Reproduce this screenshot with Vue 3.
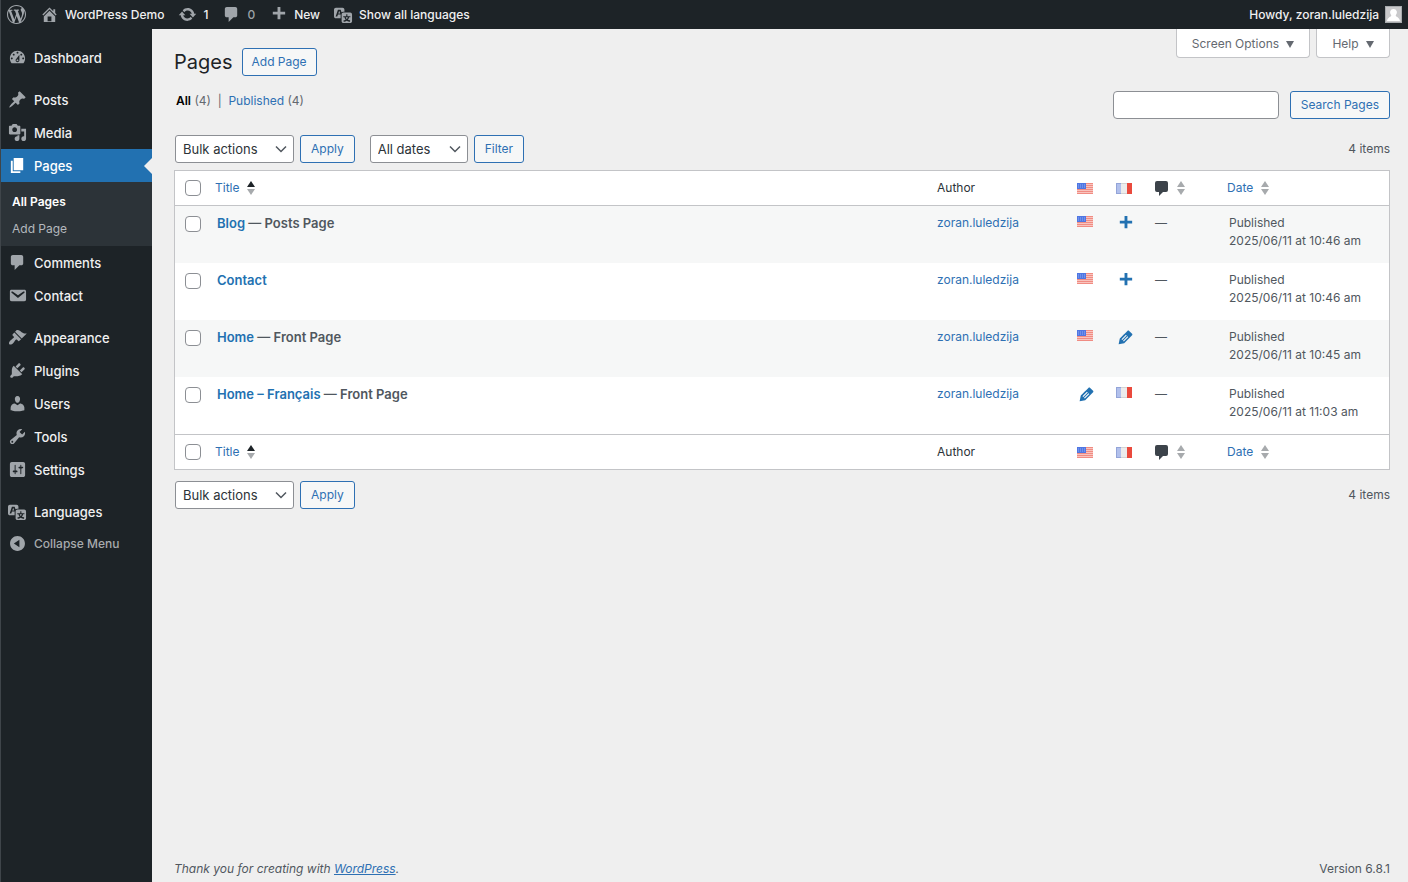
<script setup>
import { ref } from 'vue'

const icons = {
  wordpress: 'M20 10c0-5.51-4.49-10-10-10C4.48 0 0 4.49 0 10c0 5.52 4.48 10 10 10 5.51 0 10-4.48 10-10zM7.78 15.37L4.37 6.22c.55-.02 1.17-.08 1.17-.08.5-.06.44-1.13-.06-1.11 0 0-1.45.11-2.37.11-.18 0-.37 0-.58-.01C4.12 2.69 6.87 1.11 10 1.11c2.33 0 4.45.87 6.05 2.34-.68-.11-1.65.39-1.65 1.58 0 .74.45 1.36.9 2.1.35.61.55 1.36.55 2.46 0 1.49-1.4 5-1.4 5l-3.03-8.37c.54-.02.82-.17.82-.17.5-.05.44-1.25-.06-1.22 0 0-1.44.12-2.38.12-.87 0-2.33-.12-2.33-.12-.5-.03-.56 1.2-.06 1.22l.92.08 1.26 3.41zM17.41 10c.24-.64.74-1.87.43-4.25.7 1.29 1.05 2.71 1.05 4.25 0 3.29-1.73 6.24-4.4 7.78.97-2.59 1.94-5.2 2.92-7.78zM6.1 18.09C3.12 16.65 1.11 13.53 1.11 10c0-1.3.23-2.48.72-3.59C3.25 10.3 4.67 14.2 6.1 18.09zm4.03-6.63l2.58 6.98c-.86.29-1.76.45-2.71.45-.79 0-1.57-.11-2.29-.33.81-2.38 1.62-4.74 2.42-7.1z',
  home: 'M16 8.5l1.53 1.53-1.06 1.06L10 4.6l-6.47 6.49-1.06-1.06L10 2.5l4 4v-2h2v4zm-6-2.46l6 5.99V18H4v-5.97zM12 17v-5H8v5h4z',
  update: 'M10.2 3.28c3.53 0 6.43 2.61 6.92 6h2.08l-3.5 4-3.5-4h2.32c-.45-1.97-2.21-3.45-4.32-3.45-1.45 0-2.73.71-3.54 1.78L4.95 5.66C6.23 4.2 8.11 3.28 10.2 3.28zm-.4 13.44c-3.52 0-6.43-2.61-6.92-6H.8l3.5-4c1.17 1.33 2.33 2.67 3.5 4H5.48c.45 1.97 2.21 3.45 4.32 3.45 1.45 0 2.73-.71 3.54-1.78l1.71 1.95c-1.28 1.46-3.15 2.38-5.25 2.38z',
  comment: 'M5 2h9c1.1 0 2 .9 2 2v7c0 1.1-.9 2-2 2h-2l-5 5v-5H5c-1.1 0-2-.9-2-2V4c0-1.1.9-2 2-2z',
  plus: 'M17 7v3h-5v5H9v-5H4V7h5V2h3v5h5z',
  translation: 'M11 7H9.49c-.63 0-1.25.3-1.59.7L7 5H4.13l-2.39 7h1.69l.74-2H7v4H2c-1.1 0-2-.9-2-2V5c0-1.1.9-2 2-2h7c1.1 0 2 .9 2 2v2zM6.51 9H4.49l1-2.93zM10 8h7c1.1 0 2 .9 2 2v7c0 1.1-.9 2-2 2h-7c-1.1 0-2-.9-2-2v-7c0-1.1.9-2 2-2zm7.25 5v-1.08h-3.17V9.75h-1.16v2.17H9.75V13h1.28c.11.85.56 1.85 1.28 2.62-.87.36-1.89.62-2.31.62-.01.02.22.97.2 1.46.84 0 2.21-.5 3.28-1.15 1.09.65 2.48 1.15 3.34 1.15-.02-.49.2-1.44.2-1.46-.43 0-1.49-.27-2.38-.63.7-.77 1.14-1.77 1.25-2.61h1.36zm-3.81 1.93c-.5-.46-.85-1.13-1.01-1.93h2.09c-.17.8-.51 1.47-1 1.93l-.04.03s-.03-.02-.04-.03z',
  dashboard: 'M3.76 16h12.48c1.1-1.37 1.76-3.11 1.76-5 0-4.42-3.58-8-8-8s-8 3.58-8 8c0 1.89.66 3.63 1.76 5zM10 4c.55 0 1 .45 1 1s-.45 1-1 1-1-.45-1-1 .45-1 1-1zM6 6c.55 0 1 .45 1 1s-.45 1-1 1-1-.45-1-1 .45-1 1-1zm8 0c.55 0 1 .45 1 1s-.45 1-1 1-1-.45-1-1 .45-1 1-1zm-5.37 5.55L12 7v6c0 1.1-.9 2-2 2s-2-.9-2-2c0-.57.24-1.08.63-1.45zM4 10c.55 0 1 .45 1 1s-.45 1-1 1-1-.45-1-1 .45-1 1-1zm12 0c.55 0 1 .45 1 1s-.45 1-1 1-1-.45-1-1 .45-1 1-1zm-5 3c0-.55-.45-1-1-1s-1 .45-1 1 .45 1 1 1 1-.45 1-1z',
  pin: 'M10.44 3.02l1.82-1.82 6.36 6.35-1.83 1.82c-1.05-.68-2.48-.57-3.41.36l-.75.75c-.92.93-1.04 2.35-.35 3.41l-1.83 1.82-2.41-2.41-2.8 2.79c-.42.42-3.38 2.71-3.8 2.29s1.86-3.39 2.28-3.81l2.79-2.79L4.1 9.36l1.83-1.82c1.05.69 2.48.57 3.4-.36l.75-.75c.93-.92 1.05-2.35.36-3.41z',
  media: 'M13 11V4c0-.55-.45-1-1-1h-1.67L9 1H5L3.67 3H2c-.55 0-1 .45-1 1v7c0 .55.45 1 1 1h10c.55 0 1-.45 1-1zM7 4.5c1.38 0 2.5 1.12 2.5 2.5S8.38 9.5 7 9.5 4.5 8.38 4.5 7 5.62 4.5 7 4.5zM14 6h5v10.5c0 1.38-1.12 2.5-2.5 2.5S14 17.88 14 16.5s1.12-2.5 2.5-2.5c.17 0 .34.02.5.05V9h-3V6zm-4 8.05V13h2v3.5c0 1.38-1.12 2.5-2.5 2.5S7 17.88 7 16.5 8.12 14 9.5 14c.17 0 .34.02.5.05z',
  page: 'M6 15V2h10v13H6zm-1 1h8v2H3V5h2v11z',
  email: 'M3.87 4h13.25C18.37 4 19 4.59 19 5.79v8.42c0 1.19-.63 1.79-1.88 1.79H3.87c-1.25 0-1.88-.6-1.88-1.79V5.79c0-1.2.63-1.79 1.88-1.79zm6.62 8.6l6.74-5.53c.24-.2.43-.66.13-1.07-.29-.41-.82-.42-1.17-.17l-5.7 3.86L4.8 5.83c-.35-.25-.88-.24-1.17.17-.3.41-.11.87.13 1.07z',
  appearance: 'M14.48 11.06L7.41 3.99l1.5-1.5c.5-.56 2.3-.47 3.51.32 1.21.8 1.43 1.28 2.91 2.1 1.18.64 2.45 1.26 4.45.85zm-.71.71L6.7 4.7 4.93 6.47c-.39.39-.39 1.02 0 1.41l1.06 1.06c.39.39.39 1.03 0 1.42-.6.6-1.43 1.11-2.21 1.69-.35.26-.7.53-1.01.84C1.43 14.23.4 16.08 1.4 17.07c.99 1 2.84-.03 4.18-1.36.31-.31.58-.66.85-1.02.57-.78 1.08-1.61 1.69-2.21.39-.39 1.02-.39 1.41 0l1.06 1.06c.39.39 1.02.39 1.41 0z',
  plugins: 'M13.11 4.36L9.87 7.6 8 5.73l3.24-3.24c.35-.34 1.05-.2 1.56.32.52.51.66 1.21.31 1.55zm-8 1.77l.91-1.12 9.01 9.01-1.19.84c-.71.71-2.63 1.16-3.82 1.16H6.14L4.9 17.26c-.59.59-1.54.59-2.12 0-.59-.58-.59-1.53 0-2.12l1.24-1.24v-3.88c0-1.13.4-3.19 1.09-3.89zm7.26 3.97l3.24-3.24c.34-.35 1.04-.21 1.55.31.52.51.66 1.21.31 1.55l-3.24 3.25z',
  users: 'M10 9.25c-2.27 0-2.73-3.44-2.73-3.44C7 4.02 7.82 2 9.97 2c2.16 0 2.98 2.02 2.71 3.81 0 0-.41 3.44-2.68 3.44zm0 2.57L12.72 10c2.39 0 4.52 2.33 4.52 4.53v2.49s-3.65 1.13-7.24 1.13c-3.65 0-7.24-1.13-7.24-1.13v-2.49c0-2.25 1.94-4.48 4.47-4.48z',
  tools: 'M16.68 9.77c-1.34 1.34-3.3 1.67-4.95.99l-5.41 6.52c-.99.99-2.59.99-3.58 0s-.99-2.59 0-3.57l6.52-5.42c-.68-1.65-.35-3.61.99-4.95 1.28-1.28 3.12-1.62 4.72-1.06l-2.89 2.89 2.82 2.82 2.86-2.87c.53 1.58.18 3.39-1.08 4.65zM3.81 16.21c.4.39 1.04.39 1.43 0 .4-.4.4-1.04 0-1.43-.39-.4-1.03-.4-1.43 0-.39.39-.39 1.03 0 1.43z',
  settings: 'M18 16V4c0-1.1-.9-2-2-2H4c-1.1 0-2 .9-2 2v12c0 1.1.9 2 2 2h12c1.1 0 2-.9 2-2zM8 11h1c.55 0 1 .45 1 1s-.45 1-1 1H8v1.5c0 .28-.22.5-.5.5s-.5-.22-.5-.5V13H6c-.55 0-1-.45-1-1s.45-1 1-1h1V5.5c0-.28.22-.5.5-.5s.5.22.5.5V11zm5-2h-1c-.55 0-1-.45-1-1s.45-1 1-1h1V5.5c0-.28.22-.5.5-.5s.5.22.5.5V7h1c.55 0 1 .45 1 1s-.45 1-1 1h-1v5.5c0 .28-.22.5-.5.5s-.5-.22-.5-.5V9z',
  collapse: 'M10 2.16c4.33 0 7.84 3.51 7.84 7.84s-3.51 7.84-7.84 7.84S2.16 14.33 2.16 10 5.67 2.16 10 2.16zm2 11.72V6.12L6.18 9.97z',
  pencil: 'M13.89 3.09l3.01 3.02c.46.46.42 1.24.03 1.64l-8.31 8.32-5.86 1.16 1.16-5.88s7.9-7.93 8.29-8.33c.39-.39 1.22-.39 1.68.07zM10.5 7.100l-4.7 4.700.8.8 4.700-4.700zM12.100 8.700l-4.700 4.700.8.8 4.700-4.700z'
}

const barItems = [
  { icon: 'wordpress', label: '', name: 'About WordPress' },
  { icon: 'home', label: 'WordPress Demo' },
  { icon: 'update', label: '1' },
  { icon: 'comment', label: '0', dim: true },
  { icon: 'plus', label: 'New' },
  { icon: 'translation', label: 'Show all languages' }
]

const menuGroups = [
  [{ icon: 'dashboard', label: 'Dashboard' }],
  [
    { icon: 'pin', label: 'Posts' },
    { icon: 'media', label: 'Media' },
    { icon: 'page', label: 'Pages', current: true, children: ['All Pages', 'Add Page'] },
    { icon: 'comment', label: 'Comments' },
    { icon: 'email', label: 'Contact' }
  ],
  [
    { icon: 'appearance', label: 'Appearance' },
    { icon: 'plugins', label: 'Plugins' },
    { icon: 'users', label: 'Users' },
    { icon: 'tools', label: 'Tools' },
    { icon: 'settings', label: 'Settings' }
  ],
  [{ icon: 'translation', label: 'Languages' }]
]

const rows = [
  { title: 'Blog', state: 'Posts Page', en: 'us', fr: 'plus', date: '2025/06/11 at 10:46 am' },
  { title: 'Contact', state: '', en: 'us', fr: 'plus', date: '2025/06/11 at 10:46 am' },
  { title: 'Home', state: 'Front Page', en: 'us', fr: 'pencil', date: '2025/06/11 at 10:45 am' },
  { title: 'Home – Français', state: 'Front Page', en: 'pencil', fr: 'fr', date: '2025/06/11 at 11:03 am' }
]

const bulk = ref('Bulk actions')
const bulkBottom = ref('Bulk actions')
const dates = ref('All dates')
const query = ref('')
</script>

<template>
  <div class="shell">
    <svg class="defs" aria-hidden="true">
      <symbol id="flag-us" viewBox="0 0 16 11">
        <rect width="16" height="11" fill="#f9c4be" />
        <path d="M0 .5h16M0 2.5h16M0 4.5h16M0 6.5h16M0 8.5h16M0 10.5h16" stroke="#f08c83" />
        <rect width="9" height="6" fill="#4f76e2" />
        <path d="M1 2h7M1 4h7" stroke="#8fabf3" stroke-width="1" stroke-dasharray="1 1" />
      </symbol>
      <symbol id="flag-fr" viewBox="0 0 16 11">
        <rect width="16" height="11" fill="#ececec" />
        <rect width="5" height="11" fill="#b1c0ec" />
        <rect x="11" width="5" height="11" fill="#ea4a3d" />
        <path d="M.5 0v11M0 .5h5M0 10.5h5" stroke="#93a4d8" />
        <path d="M5 .5h6M5 10.5h6" stroke="#d4d4d4" />
      </symbol>
    </svg>

    <header class="bar">
      <nav class="bar-nav" aria-label="Toolbar">
        <a v-for="b in barItems" :key="b.icon" href="#" class="bar-item" :class="{ dim: b.dim }" :aria-label="b.name">
          <svg class="icon" viewBox="0 0 20 20"><path :d="icons[b.icon]" /></svg>
          <span v-if="b.label">{{ b.label }}</span>
        </a>
      </nav>
      <a href="#" class="bar-item account">
        <span>Howdy, zoran.luledzija</span>
        <svg class="avatar" viewBox="0 0 17 17">
          <rect width="17" height="17" fill="#c9c9cb" />
          <path d="M8.5 3a3.400 3.600 0 0 1 2.200 6.400c0 1.600 3.800 1.400 4.300 5.600H2c.5-4.200 4.300-4 4.300-5.600A3.400 3.600 0 0 1 8.500 3z" fill="#fff" />
          <rect x=".5" y=".5" width="16" height="16" fill="none" stroke="#a7aaad" />
        </svg>
      </a>
    </header>

    <div class="body">
      <nav class="menu" aria-label="Main menu">
        <ul v-for="(g, i) in menuGroups" :key="i" class="group">
          <li v-for="m in g" :key="m.label">
            <a href="#" class="menu-item" :class="{ current: m.current }">
              <svg class="icon" viewBox="0 0 20 20"><path :d="icons[m.icon]" /></svg>
              <span>{{ m.label }}</span>
            </a>
            <ul v-if="m.children" class="submenu">
              <li v-for="(c, k) in m.children" :key="c">
                <a href="#" :class="{ active: k === 0 }">{{ c }}</a>
              </li>
            </ul>
          </li>
        </ul>
        <button type="button" class="menu-item collapse">
          <svg class="icon" viewBox="0 0 20 20"><path :d="icons.collapse" /></svg>
          <span>Collapse Menu</span>
        </button>
      </nav>

      <main class="content">
        <div class="head">
          <div class="heading">
            <h1>Pages</h1>
            <a href="#" class="btn">Add Page</a>
          </div>
          <div class="tabs">
            <button type="button">Screen Options <svg viewBox="0 0 8 7"><path d="M0 0h8L4 7z" /></svg></button>
            <button type="button">Help <svg viewBox="0 0 8 7"><path d="M0 0h8L4 7z" /></svg></button>
          </div>
        </div>

        <div class="views">
          <p><a href="#" class="all">All</a> (4) &nbsp;|&nbsp; <a href="#">Published</a> (4)</p>
          <form class="search" @submit.prevent>
            <input v-model="query" type="search" aria-label="Search Pages" />
            <button type="submit" class="btn">Search Pages</button>
          </form>
        </div>

        <div class="nav-row">
          <span class="select bulk">
            <select v-model="bulk" aria-label="Select bulk action"><option>Bulk actions</option></select>
            <svg viewBox="0 0 12 8"><path d="M1 1.500l5 5 5-5" /></svg>
          </span>
          <button type="button" class="btn">Apply</button>
          <span class="select dates">
            <select v-model="dates" aria-label="Filter by date"><option>All dates</option></select>
            <svg viewBox="0 0 12 8"><path d="M1 1.500l5 5 5-5" /></svg>
          </span>
          <button type="button" class="btn">Filter</button>
          <span class="count">4 items</span>
        </div>

        <table class="list">
          <colgroup>
            <col class="c-check" /><col /><col class="c-author" /><col class="c-flag" /><col class="c-flag" /><col class="c-comments" /><col class="c-date" />
          </colgroup>
          <component :is="part" v-for="part in ['thead', 'tfoot']" :key="part">
            <tr>
              <td class="check"><input type="checkbox" aria-label="Select all" /></td>
              <th scope="col" class="sortable">
                <a href="#">Title <svg class="sort asc" viewBox="0 0 8 14"><path d="M0 6l4-6 4 6z" /><path d="M0 8h8l-4 6z" /></svg></a>
              </th>
              <th scope="col">Author</th>
              <th scope="col"><svg class="flag" role="img" aria-label="English"><use href="#flag-us" /></svg></th>
              <th scope="col"><svg class="flag" role="img" aria-label="Français"><use href="#flag-fr" /></svg></th>
              <th scope="col">
                <a href="#" aria-label="Comments">
                  <svg class="bubble" viewBox="0 0 13 15"><path d="M2 0h9a2 2 0 0 1 2 2v7a2 2 0 0 1-2 2H8l-4 4v-4H2a2 2 0 0 1-2-2V2a2 2 0 0 1 2-2z" /></svg>
                  <svg class="sort" viewBox="0 0 8 14"><path d="M0 6l4-6 4 6z" /><path d="M0 8h8l-4 6z" /></svg>
                </a>
              </th>
              <th scope="col" class="sortable">
                <a href="#">Date <svg class="sort" viewBox="0 0 8 14"><path d="M0 6l4-6 4 6z" /><path d="M0 8h8l-4 6z" /></svg></a>
              </th>
            </tr>
          </component>
          <tbody>
            <tr v-for="r in rows" :key="r.title">
              <td class="check"><input type="checkbox" :aria-label="'Select ' + r.title" /></td>
              <td class="title"><a href="#">{{ r.title }}</a><template v-if="r.state"> — {{ r.state }}</template></td>
              <td><a href="#">zoran.luledzija</a></td>
              <td v-for="lang in ['en', 'fr']" :key="lang">
                <svg v-if="r[lang] === 'us' || r[lang] === 'fr'" class="flag"><use :href="'#flag-' + r[lang]" /></svg>
                <a v-else href="#" class="act" :aria-label="r[lang] === 'plus' ? 'Add translation' : 'Edit translation'">
                  <svg viewBox="0 0 20 20"><path :d="icons[r[lang]]" fill-rule="evenodd" /></svg>
                </a>
              </td>
              <td>—</td>
              <td>Published<br />{{ r.date }}</td>
            </tr>
          </tbody>
        </table>

        <div class="nav-row bottom">
          <span class="select bulk">
            <select v-model="bulkBottom" aria-label="Select bulk action below"><option>Bulk actions</option></select>
            <svg viewBox="0 0 12 8"><path d="M1 1.500l5 5 5-5" /></svg>
          </span>
          <button type="button" class="btn">Apply</button>
          <span class="count">4 items</span>
        </div>

        <footer class="foot">
          <em>Thank you for creating with <a href="#">WordPress</a>.</em>
          <span>Version 6.8.1</span>
        </footer>
      </main>
    </div>
  </div>
</template>

<style>
body {
  margin: 0;
  background: #efefef;
}
</style>

<style scoped>
.shell {
  display: flex;
  flex-direction: column;
  min-height: 100vh;
  box-sizing: border-box;
  color: #3c434a;
  font-family: Inter, "Liberation Sans", sans-serif;
  font-size: 13px;
  line-height: 18px;
}
.defs { position: absolute; width: 0; height: 0; }
a { color: #2e70b3; text-decoration: none; }
button, input, select { font: inherit; box-sizing: border-box; margin: 0; }
ul { list-style: none; margin: 0; padding: 0; }
svg { flex: none; }
.icon { width: 19px; height: 19px; fill: #a0a5aa; }

.bar {
  display: flex;
  justify-content: space-between;
  height: 29px;
  padding: 0 6px;
  background: #1d2327;
  border-left: 1px solid #3f454a;
}
.bar-nav { display: flex; gap: 14px; }
.bar-item { display: flex; align-items: center; gap: 6px; color: #f0f0f1; font-size: 12px; font-weight: 500; }
.dim { color: #9ca2a7; }
.avatar { width: 17px; height: 17px; }

.body { display: flex; flex: 1; }
.menu {
  flex: none;
  width: 152px;
  box-sizing: border-box;
  padding-top: 12px;
  background: #1d2327;
  border-left: 1px solid #3f454a;
}
.group { margin-bottom: 9px; }
.group:last-of-type { margin-bottom: 0; }
.menu-item {
  position: relative;
  display: flex;
  align-items: center;
  gap: 7px;
  height: 33px;
  padding: 0 7px;
  color: #f0f0f1;
  font-weight: 500;
}
.current { background: #2271b1; color: #fff; }
.current .icon { fill: #fff; }
.current::after {
  content: "";
  position: absolute;
  right: 0;
  top: 9px;
  border: 8px solid transparent;
  border-left: 0;
  border-right-color: #efefef;
}
.submenu { padding: 6px 0 4px; background: #2c3338; }
.submenu a { display: block; padding-left: 11px; line-height: 27px; color: #b4b9be; font-size: 12px; }
.submenu a.active { color: #fff; font-weight: 600; }
.collapse { width: 100%; height: 31px; border: 0; background: none; color: #a7aaad; font-size: 12px; }

.content {
  flex: 1;
  min-width: 0;
  display: flex;
  flex-direction: column;
  padding: 0 18px 4px 22px;
}
.head { display: flex; justify-content: space-between; align-items: flex-start; }
.heading { display: flex; align-items: center; gap: 9px; padding-top: 19px; }
h1 { margin: 0; font-size: 20px; font-weight: 400; line-height: 28px; color: #1d2327; }
.btn {
  height: 28px;
  box-sizing: border-box;
  padding: 0 10px;
  border: 1px solid #2e70b3;
  border-radius: 3px;
  background: #f6f7f7;
  color: #2e70b3;
  line-height: 26px;
  font-size: 12px;
}
.heading .btn { padding: 0 9px; }
.tabs { display: flex; gap: 6px; }
.tabs button {
  height: 29px;
  padding: 1px 15px 0;
  border: 1px solid #c3c4c7;
  border-top: 0;
  border-radius: 0 0 4px 4px;
  background: #fff;
  color: #646970;
  font-size: 12px;
}
.tabs svg { width: 8px; height: 7px; margin-left: 4px; fill: #646970; }

.views { display: flex; justify-content: space-between; margin-top: 15px; }
.views p { margin: 0; padding: 1px 0 0 2px; color: #646970; font-size: 12px; }
.views .all { color: #000; font-weight: 600; }
.search { display: flex; gap: 11px; }
.search input {
  width: 166px;
  height: 28px;
  border: 1px solid #8c8f94;
  border-radius: 4px;
  background: #fff;
}

.nav-row { display: flex; align-items: center; gap: 6px; margin: 16px 0 7px; padding-left: 1px; }
.nav-row.bottom { margin: 11px 0 0; }
.select { position: relative; display: flex; }
.select select {
  width: 100%;
  height: 28px;
  padding: 0 24px 0 7px;
  border: 1px solid #8c8f94;
  border-radius: 3px;
  background: #fff;
  color: #2c3338;
  appearance: none;
}
.select svg {
  position: absolute;
  right: 7px;
  top: 10px;
  width: 12px;
  height: 8px;
  fill: none;
  stroke: #50575e;
  stroke-width: 1.5;
  pointer-events: none;
}
.bulk { width: 119px; }
.dates { width: 98px; margin-left: 9px; }
.count { margin-left: auto; font-size: 12px; color: #50575e; }

.list {
  width: 100%;
  table-layout: fixed;
  border-collapse: separate;
  border-spacing: 0;
  border: 1px solid #c3c4c7;
  background: #fff;
  color: #50575e;
  font-size: 12px;
}
.c-check { width: 32px; }
.c-author { width: 140px; }
.c-flag { width: 39px; }
.c-comments { width: 74px; }
.c-date { width: 170px; }
th, td { padding: 0 10px; text-align: left; vertical-align: top; font-weight: 400; }
thead th, thead td, tfoot th, tfoot td { height: 34px; color: #2c3338; vertical-align: middle; }
thead th, thead td { border-bottom: 1px solid #c3c4c7; }
tfoot th, tfoot td { border-top: 1px solid #c3c4c7; }
th a { display: flex; align-items: center; gap: 8px; }
th.sortable { padding: 0 8px; }
tbody td { height: 49px; padding-top: 8px; }
tbody tr:nth-child(odd) { background: #f6f7f7; }
.title, .title a { font-size: 13px; font-weight: 600; }
.title a { color: #2271b1; }
.list .check { padding-right: 0; }
.check input {
  display: block;
  width: 16px;
  height: 16px;
  border: 1px solid #8c8f94;
  border-radius: 4px;
  background: #fff;
  appearance: none;
}
tbody .check { padding-top: 10px; height: 47px; }
.flag { display: block; width: 16px; height: 11px; }
tbody .flag { margin-top: 2px; }
.sort { width: 8px; height: 14px; fill: #a7aaad; }
.asc path:first-child { fill: #1d2327; }
.bubble { width: 13px; height: 15px; margin-right: 1px; fill: #3c434a; }
.act { display: block; }
.act svg { display: block; width: 19px; height: 19px; fill: #2271b1; }

.foot {
  display: flex;
  justify-content: space-between;
  margin-top: auto;
  color: #50575e;
  font-size: 12px;
}
.foot a { text-decoration: underline; }
</style>
